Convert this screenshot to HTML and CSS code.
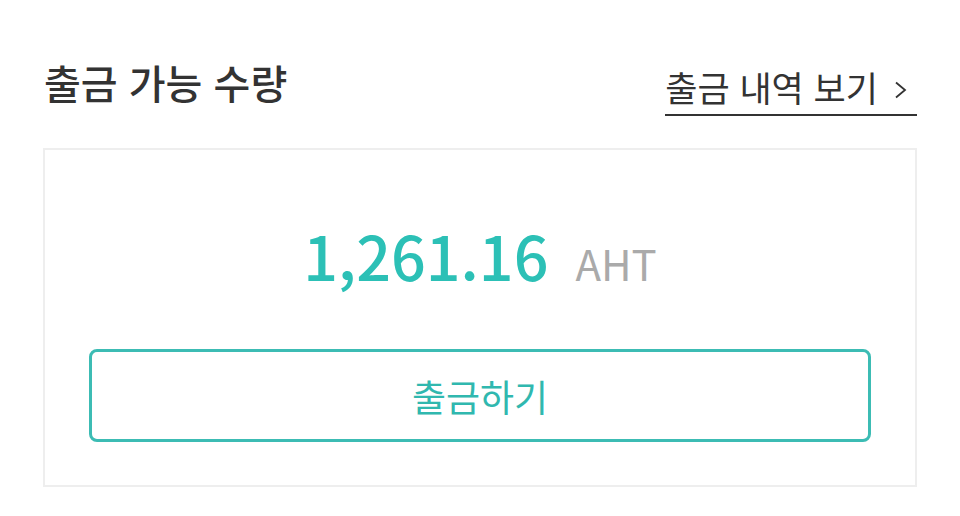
FILE: index.html
```html
<!DOCTYPE html>
<html lang="ko">
<head>
  <meta charset="UTF-8">
  <title>출금 가능 수량</title>
  <link rel="stylesheet" href="styles.css">
</head>
<body>
  <div class="wrap">
    <div class="head">
      <h2>출금 가능 수량</h2>
      <a class="history" href="#">출금 내역 보기<svg class="arrow" width="13" height="18" viewBox="0 0 13 18"><path d="M2 1.5 L11 9 L2 16.5" fill="none" stroke="#333" stroke-width="1.8"/></svg></a>
    </div>

    <div class="card">
      <div class="amount">
        <span class="num">1,261.16</span>
        <span class="unit">AHT</span>
      </div>
      <button class="withdraw">출금하기</button>
    </div>
  </div>
</body>
</html>
```

FILE: styles.css
```css
body {
  margin: 0;
  background: #fff;
  font-family: "Noto Sans CJK KR", "Noto Sans", sans-serif;
  color: #333;
}

.wrap {
  padding: 0 43px;
}

.head {
  display: flex;
  justify-content: space-between;
  align-items: flex-start;
  height: 148px;
}

h2 {
  margin: 54px 0 0 1px;
  font-size: 40px;
  line-height: 56px;
  font-weight: 500;
  color: #333;
}

.history {
  display: flex;
  align-items: center;
  margin-top: 66px;
  padding-bottom: 6px;
  color: #333;
  font-size: 35px;
  line-height: 42px;
  text-decoration: none;
  border-bottom: 2px solid #333;
}

.arrow {
  margin: 6px 10px 0 16px;
}

.card {
  border: 2px solid #eeeeee;
  padding: 74px 44px 43px;
}

.amount {
  display: flex;
  justify-content: center;
  align-items: baseline;
  gap: 27px;
  line-height: 1;
}

.num {
  font-size: 61px;
  font-weight: 500;
  color: #2cc0b6;
}

.unit {
  font-size: 42px;
  color: #aaaaaa;
}

.withdraw {
  display: block;
  width: 100%;
  height: 93px;
  margin-top: 64px;
  background: #fff;
  border: 3px solid #3cbcb4;
  border-radius: 8px;
  color: #30b8af;
  font-family: inherit;
  font-size: 37px;
}
```
